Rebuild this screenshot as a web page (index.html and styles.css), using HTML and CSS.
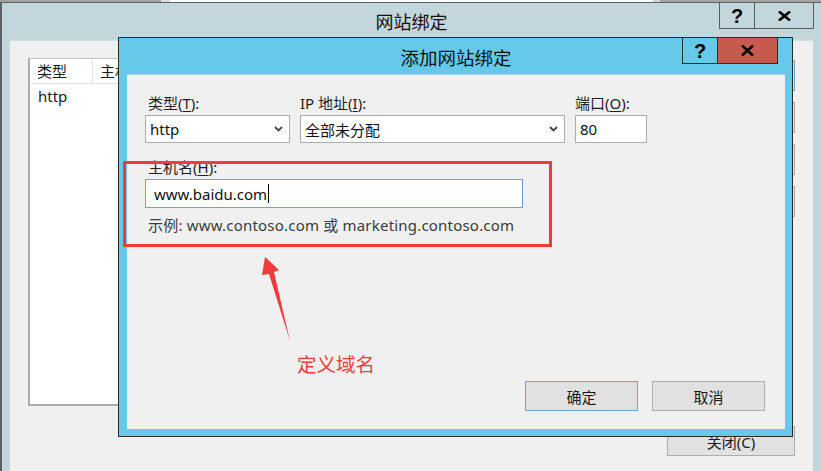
FILE: index.html
```html
<!DOCTYPE html>
<html lang="zh-CN">
<head>
<meta charset="utf-8">
<title>添加网站绑定</title>
<link rel="stylesheet" href="styles.css">
</head>
<body>
<div class="desk"><span class="d1"></span><span class="d2"></span><span class="d3"></span><span class="d4"></span><span class="d5"></span></div>

<div class="bgwin">
  <div class="bg-title">
    <span class="title-text">网站绑定</span>
    <div class="caps bg-caps">
      <span class="cap cap-help">?</span>
      <span class="cap cap-close"><svg width="13" height="10" viewBox="0 0 13 10"><path d="M1 0.5 L12 9.5 M12 0.5 L1 9.5" stroke="#000" stroke-width="2.6" fill="none"/></svg></span>
    </div>
  </div>
  <div class="bg-client">
    <div class="listview">
      <div class="lv-head">
        <span class="lv-cell lv-c1">类型</span>
        <span class="lv-cell lv-c2">主机名</span>
      </div>
      <div class="lv-row"><span class="lv-c1">http</span></div>
    </div>
    <div class="bg-side">
      <button class="wbtn side-btn side-default">添加(A)...</button>
      <button class="wbtn side-btn">编辑(E)...</button>
      <button class="wbtn side-btn">删除(R)</button>
      <button class="wbtn side-btn">浏览(B)</button>
      <button class="wbtn close-btn">关闭(C)</button>
    </div>
  </div>
</div>

<div class="dialog">
  <div class="dlg-title">
    <span class="title-text">添加网站绑定</span>
    <div class="caps dlg-caps">
      <span class="cap cap-help">?</span>
      <span class="cap cap-close red"><svg width="13" height="11" viewBox="0 0 13 11"><path d="M1 0.5 L12 10.5 M12 0.5 L1 10.5" stroke="#000" stroke-width="2.6" fill="none"/></svg></span>
    </div>
  </div>
  <div class="dlg-client">
    <div class="grid">
      <div class="field">
        <label class="lbl lbl-inset">类型(<u>T</u>):</label>
        <div class="ctl select"><span>http</span><svg class="chev" width="9" height="6" viewBox="0 0 9 6"><path d="M1 1 L4.5 4.5 L8 1" stroke="#444" stroke-width="1.8" fill="none"/></svg></div>
      </div>
      <div class="field">
        <label class="lbl">IP 地址(<u>I</u>):</label>
        <div class="ctl select"><span>全部未分配</span><svg class="chev" width="9" height="6" viewBox="0 0 9 6"><path d="M1 1 L4.5 4.5 L8 1" stroke="#444" stroke-width="1.8" fill="none"/></svg></div>
      </div>
      <div class="field">
        <label class="lbl">端口(<u>O</u>):</label>
        <div class="ctl"><span>80</span></div>
      </div>
    </div>
    <div class="host">
      <label class="lbl lbl-inset">主机名(<u>H</u>):</label>
      <div class="ctl host-input"><span>www.baidu.com</span><span class="caret"></span></div>
      <p class="example">示例: www.contoso.com 或 marketing.contoso.com</p>
    </div>
    <div class="dlg-buttons">
      <button class="wbtn dbtn default">确定</button>
      <button class="wbtn dbtn">取消</button>
    </div>
  </div>
</div>

<div class="annot-box"></div>
<svg class="annot-arrow" width="821" height="471" viewBox="0 0 821 471">
  <polygon points="265,257 279,270 274,272 290,341 269,274 262,275" fill="#f23b3b"/>
</svg>
<div class="annot-text">定义域名</div>
</body>
</html>
```

FILE: styles.css
```css
* { box-sizing: border-box; }
html, body { margin: 0; padding: 0; }
body {
  width: 821px;
  height: 471px;
  overflow: hidden;
  position: relative;
  font-family: "Noto Sans", "Noto Sans CJK SC", sans-serif;
  font-size: 15px;
  color: #1a1a1a;
  background: #f0f0f0;
}

/* desktop strip behind */
.desk { display: flex; height: 2px; }
.desk .d1 { width: 161px; background: #a3a3a3; }
.desk .d2 { width: 9px; background: #dcdcdc; }
.desk .d3 { width: 483px; background: #fff; }
.desk .d4 { width: 7px; background: #d4d4d4; }
.desk .d5 { flex: 1; background: #a3a3a3; }

/* background window */
.bgwin {
  height: 469px;
  background: #c2d6dc;
  border-top: 1px solid #5f6066;
  border-left: 2px solid #5f6066;
  padding-left: 8px;
  display: flex;
  flex-direction: column;
}
.bg-title {
  height: 37px;
  margin-left: -8px;
  position: relative;
  display: flex;
  justify-content: center;
  align-items: center;
  font-size: 18px;
  line-height: 22px;
  color: #111;
}
.caps {
  position: absolute;
  display: flex;
  height: 27px;
}
.bg-caps { right: 7px; top: 0; height: 26px; border: 1px solid #5a5a5a; border-top: none; }
.dlg-caps { right: 7px; top: -1px; border: 1px solid #2b2b2b; }
.cap {
  display: flex;
  align-items: center;
  justify-content: center;
  height: 100%;
}
.cap-help {
  width: 35px;
  border-right: 1px solid #5a5a5a;
  font-family: "Liberation Sans", "DejaVu Sans", sans-serif;
  font-weight: bold;
  font-size: 20px;
  color: #000;
}
.dlg-caps .cap-help { border-right-color: #2b2b2b; }
.cap-close { width: 58px; }
.cap-close.red { background: #c75a4e; width: 59px; }

.bg-client {
  flex: 1;
  margin-right: 8px;
  background: #f0f0f0;
  border-top: 1px solid #d6dde0;
  display: flex;
  justify-content: space-between;
  padding: 17px 18px 0 18px;
}
.listview {
  width: 320px;
  height: 348px;
  background: #fff;
  border: 1px solid #c4c4c4;
  border-left: 2px solid #adadad;
  border-bottom: 2px solid #adadad;
  padding: 1px 0 0 0;
}
.lv-head { display: flex; height: 24px; }
.lv-cell {
  background: #fff;
  border-right: 1px solid #e3e3e3;
  border-bottom: 1px solid #e3e3e3;
  padding-left: 7px;
  line-height: 23px;
}
.lv-c1 { width: 63px; }
.lv-c2 { flex: 1; }
.lv-row { height: 24px; line-height: 24px; padding-left: 8px; }

.bg-side {
  width: 128px;
  display: flex;
  flex-direction: column;
  align-items: flex-end;
  padding-top: 2px;
}
.wbtn {
  font-family: inherit;
  font-size: 15px;
  color: #1a1a1a;
  background: #e1e1e1;
  border: 1px solid #adadad;
  padding: 0;
  margin: 0;
}
.side-btn { width: 115px; height: 31px; margin-bottom: 11px; }
.side-default { border-color: #7aa0c8; }
.close-btn { width: 128px; height: 30px; margin-top: 198px; }

/* front dialog */
.dialog {
  position: absolute;
  left: 118px;
  top: 37px;
  width: 675px;
  height: 400px;
  border: 1px solid #2b2b2b;
  background: #66c9ea;
  display: flex;
  flex-direction: column;
  padding: 0 7px 7px 8px;
}
.dlg-title {
  height: 36px;
  position: relative;
  display: flex;
  justify-content: center;
  align-items: flex-start;
  padding-top: 9px;
  font-size: 18.5px;
  line-height: 22px;
  color: #111;
}
.dlg-client {
  flex: 1;
  background: #f0f0f0;
  border-top: 1px solid #a9d7e8;
  display: flex;
  flex-direction: column;
  padding: 0 20px 18px 18px;
}
.grid {
  display: grid;
  grid-template-columns: 145px 265px 72px;
  column-gap: 10px;
  margin-top: 18px;
}
.field { display: flex; flex-direction: column; }
.lbl {
  display: block;
  height: 20px;
  line-height: 20px;
  color: #1e1e1e;
}
.lbl-inset { padding-left: 3px; }
.lbl u { text-decoration-thickness: 1px; text-underline-offset: 2px; }
.ctl {
  height: 28px;
  margin-top: 2px;
  background: #fff;
  border: 1px solid #acacac;
  display: flex;
  align-items: center;
  padding-left: 4px;
  color: #111;
}
.select { padding-right: 6px; }
.select .chev { margin-left: auto; }
.host { margin-top: 14px; }
.host-input {
  width: 378px;
  height: 29px;
  border-color: #7a9ecb;
  padding-left: 8px;
}
.caret {
  display: inline-block;
  width: 1px;
  height: 19px;
  background: #000;
  margin-left: 1px;
}
.example {
  margin: 7px 0 0 0;
  padding-left: 3px;
  line-height: 20px;
  letter-spacing: 0.2px;
  color: #3a3a3a;
}
.dlg-buttons {
  margin-top: auto;
  display: flex;
  justify-content: flex-end;
  gap: 14px;
}
.dbtn { width: 113px; height: 30px; }
.dbtn.default { border-color: #7aa0c8; }

/* annotations */
.annot-box {
  position: absolute;
  left: 123px;
  top: 161px;
  width: 429px;
  height: 86px;
  border: 3px solid #f23b3b;
}
.annot-arrow {
  position: absolute;
  left: 0;
  top: 0;
  pointer-events: none;
}
.annot-text {
  position: absolute;
  left: 297px;
  top: 352px;
  font-family: "Noto Sans CJK SC", sans-serif;
  font-size: 19.5px;
  line-height: 24px;
  color: #f23b3b;
}
```
